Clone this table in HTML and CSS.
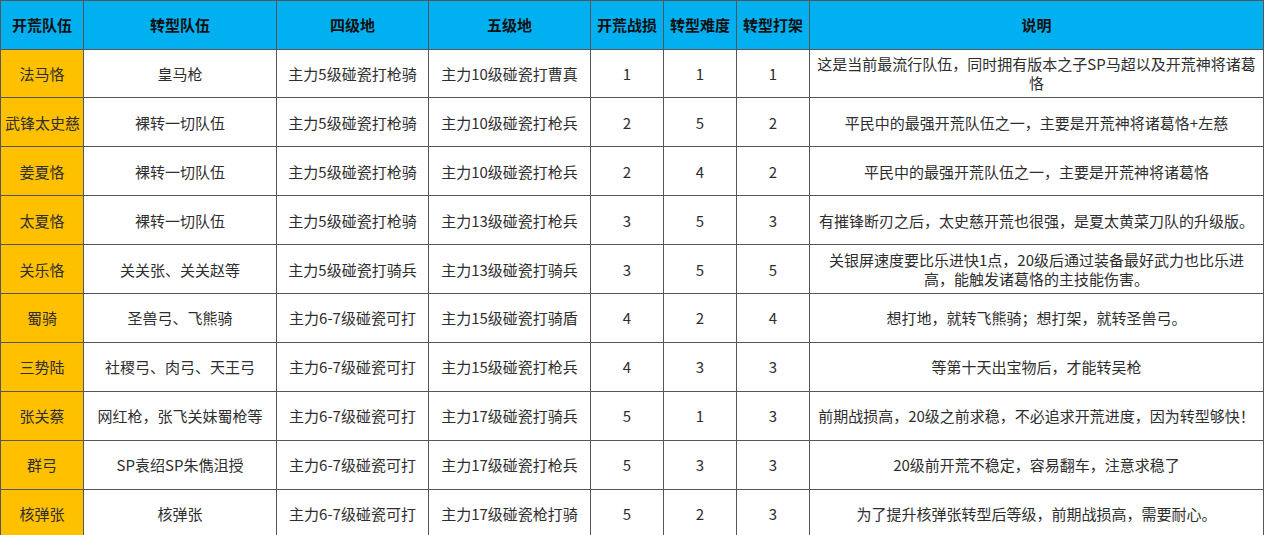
FILE: index.html
```html
<!DOCTYPE html>
<html lang="zh">
<head>
<meta charset="utf-8">
<title>开荒队伍</title>
<link rel="stylesheet" href="styles.css">
</head>
<body>
<table class="grid">
  <colgroup>
    <col class="c1"><col class="c2"><col class="c3"><col class="c4"><col class="c5"><col class="c6"><col class="c7"><col class="c8">
  </colgroup>
  <thead>
    <tr class="head">
      <th>开荒队伍</th><th>转型队伍</th><th>四级地</th><th>五级地</th><th>开荒战损</th><th>转型难度</th><th>转型打架</th><th>说明</th>
    </tr>
  </thead>
  <tbody>
    <tr><td class="team">法马恪</td><td>皇马枪</td><td>主力5级碰瓷打枪骑</td><td>主力10级碰瓷打曹真</td><td>1</td><td>1</td><td>1</td><td>这是当前最流行队伍，同时拥有版本之子SP马超以及开荒神将诸葛<br>恪</td></tr>
    <tr><td class="team">武锋太史慈</td><td>裸转一切队伍</td><td>主力5级碰瓷打枪骑</td><td>主力10级碰瓷打枪兵</td><td>2</td><td>5</td><td>2</td><td>平民中的最强开荒队伍之一，主要是开荒神将诸葛恪+左慈</td></tr>
    <tr><td class="team">姜夏恪</td><td>裸转一切队伍</td><td>主力5级碰瓷打枪骑</td><td>主力10级碰瓷打枪兵</td><td>2</td><td>4</td><td>2</td><td>平民中的最强开荒队伍之一，主要是开荒神将诸葛恪</td></tr>
    <tr><td class="team">太夏恪</td><td>裸转一切队伍</td><td>主力5级碰瓷打枪骑</td><td>主力13级碰瓷打枪兵</td><td>3</td><td>5</td><td>3</td><td>有摧锋断刃之后，太史慈开荒也很强，是夏太黄菜刀队的升级版。</td></tr>
    <tr><td class="team">关乐恪</td><td>关关张、关关赵等</td><td>主力5级碰瓷打骑兵</td><td>主力13级碰瓷打骑兵</td><td>3</td><td>5</td><td>5</td><td>关银屏速度要比乐进快1点，20级后通过装备最好武力也比乐进<br>高，能触发诸葛恪的主技能伤害。</td></tr>
    <tr><td class="team">蜀骑</td><td>圣兽弓、飞熊骑</td><td>主力6-7级碰瓷可打</td><td>主力15级碰瓷打骑盾</td><td>4</td><td>2</td><td>4</td><td>想打地，就转飞熊骑；想打架，就转圣兽弓。</td></tr>
    <tr><td class="team">三势陆</td><td>社稷弓、肉弓、天王弓</td><td>主力6-7级碰瓷可打</td><td>主力15级碰瓷打枪兵</td><td>4</td><td>3</td><td>3</td><td>等第十天出宝物后，才能转吴枪</td></tr>
    <tr><td class="team">张关蔡</td><td>网红枪，张飞关妹蜀枪等</td><td>主力6-7级碰瓷可打</td><td>主力17级碰瓷打骑兵</td><td>5</td><td>1</td><td>3</td><td>前期战损高，20级之前求稳，不必追求开荒进度，因为转型够快！</td></tr>
    <tr><td class="team">群弓</td><td>SP袁绍SP朱儁沮授</td><td>主力6-7级碰瓷可打</td><td>主力17级碰瓷打枪兵</td><td>5</td><td>3</td><td>3</td><td>20级前开荒不稳定，容易翻车，注意求稳了</td></tr>
    <tr><td class="team">核弹张</td><td>核弹张</td><td>主力6-7级碰瓷可打</td><td>主力17级碰瓷枪打骑</td><td>5</td><td>2</td><td>3</td><td>为了提升核弹张转型后等级，前期战损高，需要耐心。</td></tr>
  </tbody>
</table>
</body>
</html>
```
FILE: styles.css
```css
html, body {
  margin: 0;
  padding: 0;
  background: #ffffff;
}
body {
  font-family: "Noto Sans CJK SC", "Noto Sans", sans-serif;
  font-size: 15px;
  color: #2e2e2e;
  overflow: hidden;
}
.grid {
  border-collapse: collapse;
  table-layout: fixed;
  width: 1263px;
}
.c1 { width: 83px; }
.c2 { width: 193px; }
.c3 { width: 152px; }
.c4 { width: 162px; }
.c5 { width: 73px; }
.c6 { width: 73px; }
.c7 { width: 73px; }
.c8 { width: 454px; }
.grid th,
.grid td {
  border: 1px solid #555555;
  text-align: center;
  vertical-align: middle;
  padding: 0 4px;
  line-height: 19px;
  white-space: nowrap;
  overflow: hidden;
}
.head th {
  background: #00b0f0;
  color: #111111;
  font-weight: bold;
  height: 48.5px;
  box-sizing: border-box;
}
.grid tbody td {
  height: 48.9px;
  box-sizing: border-box;
}
.grid td.team {
  background: #ffc000;
  color: #2e2e2e;
}
```
